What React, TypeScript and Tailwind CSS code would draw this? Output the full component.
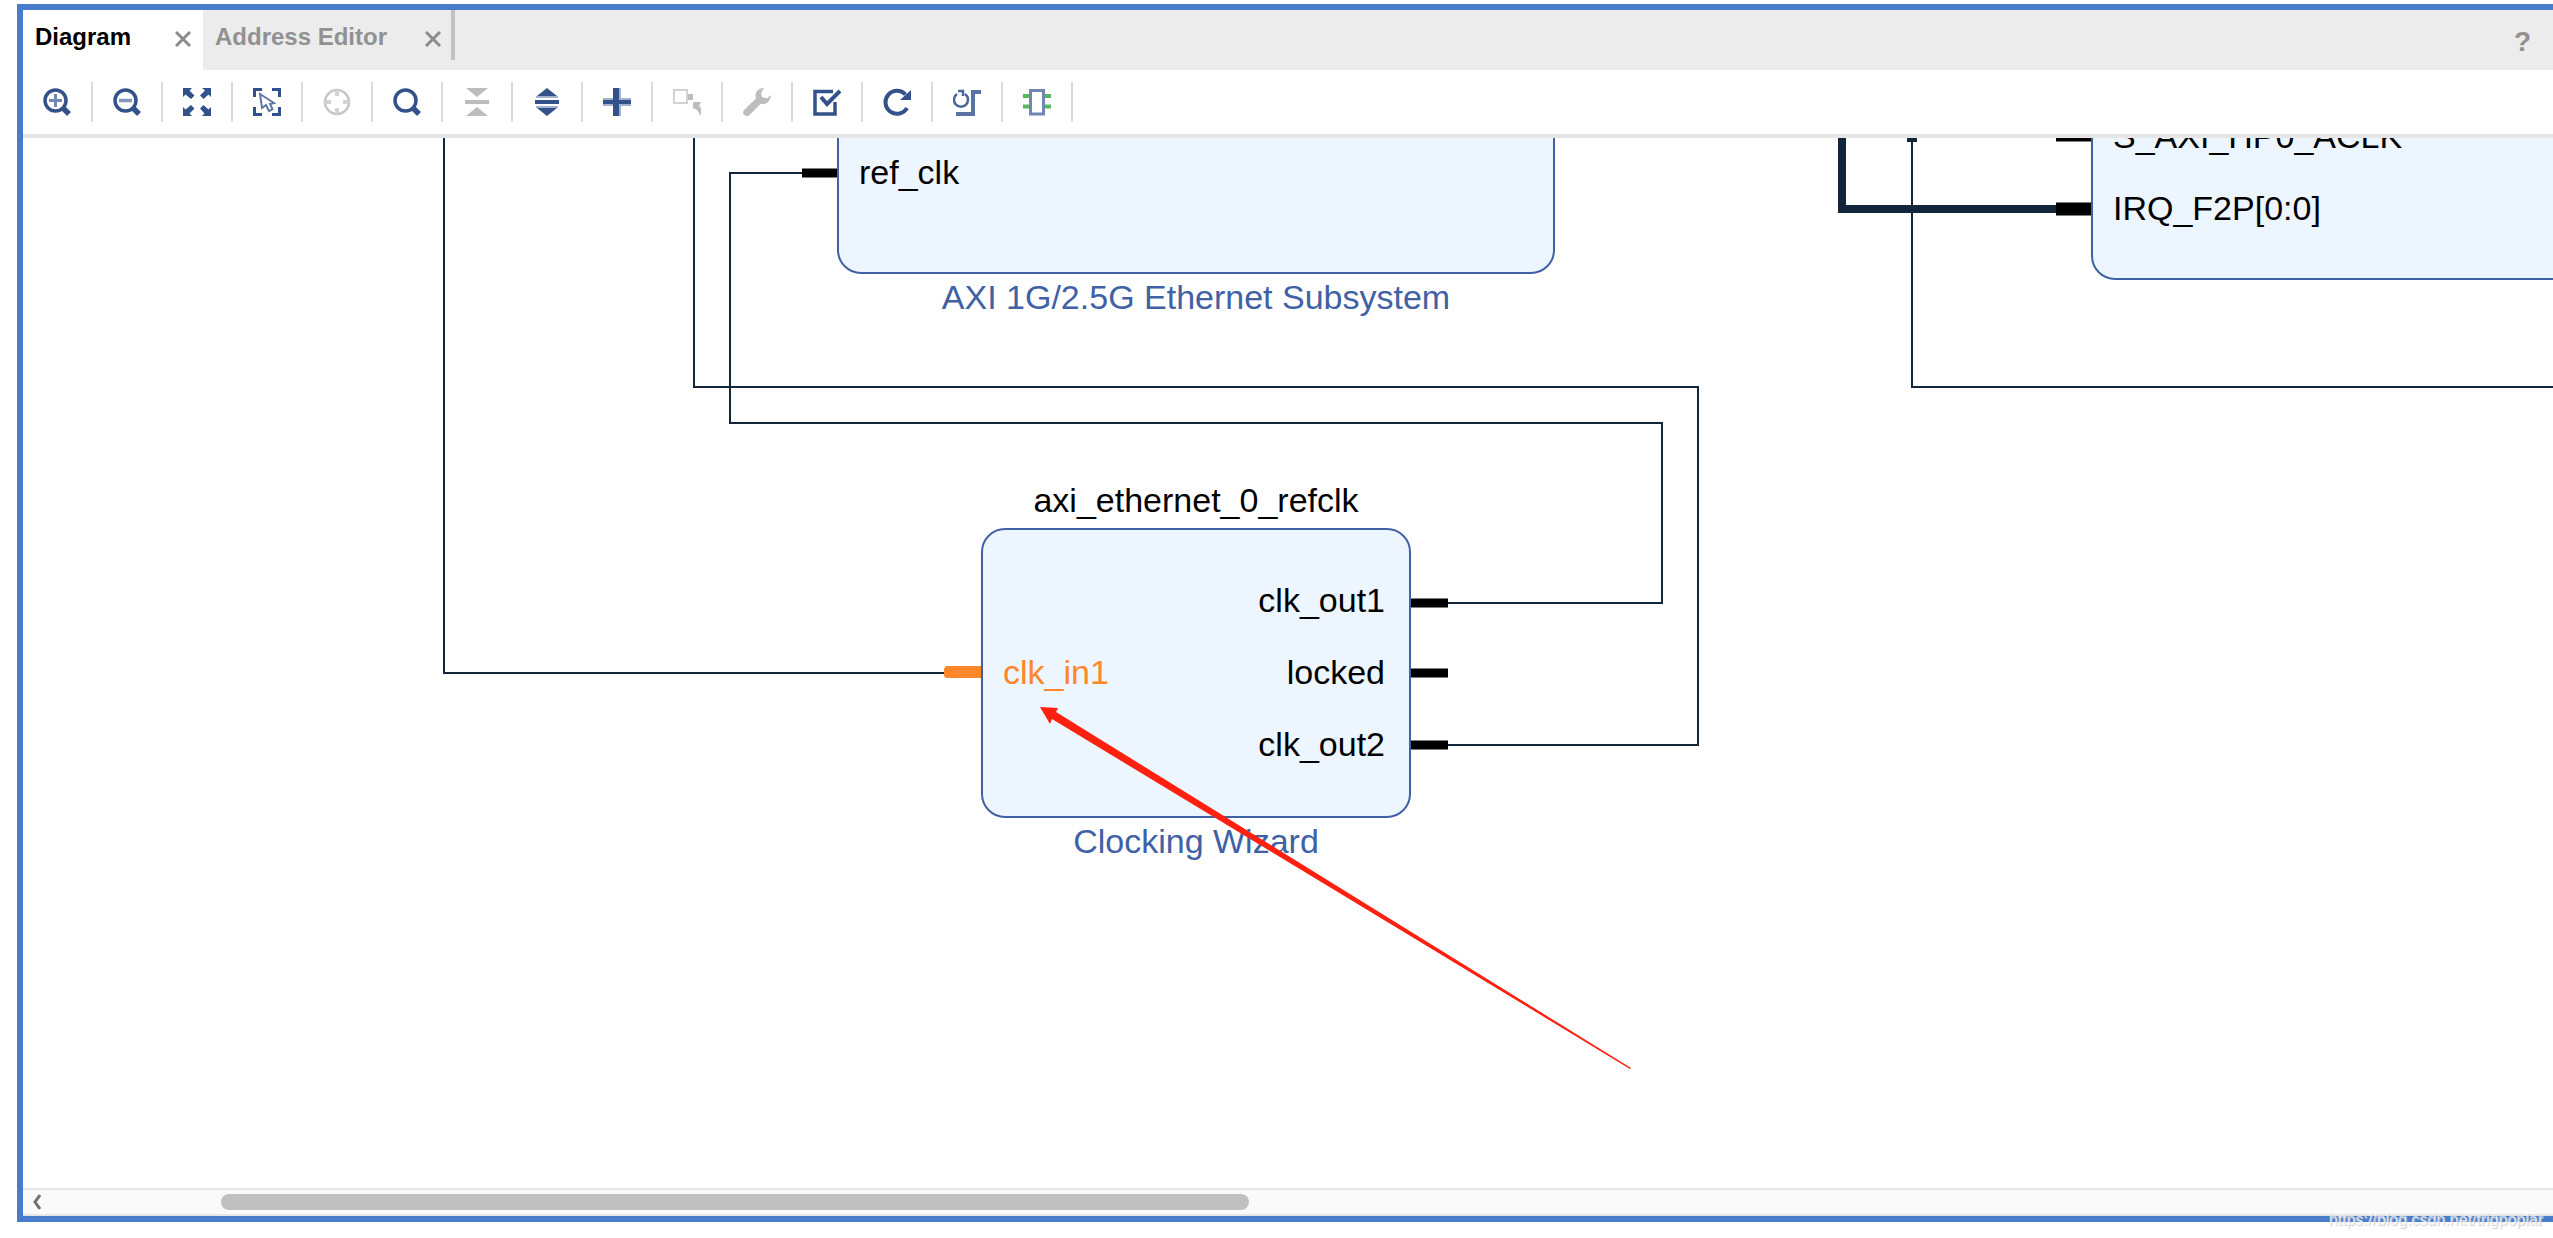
import type { ReactNode } from "react";

const NAVY = "#33518a";
const PALE = "#a4b1cd";
const GREY = "#bdbdbd";

function Icon({ children }: { children: ReactNode }) {
  return (
    <svg viewBox="0 0 28 28" className="size-7" fill="none" aria-hidden="true">
      {children}
    </svg>
  );
}

function Lens({ children }: { children?: ReactNode }) {
  return (
    <Icon>
      <circle cx="12.5" cy="12.5" r="10.5" stroke={NAVY} strokeWidth="3.5" />
      <path d="M20 20l6 6" stroke={NAVY} strokeWidth="5.5" />
      {children}
    </Icon>
  );
}

const tools: { label: string; disabled?: boolean; icon: ReactNode }[] = [
  {
    label: "Zoom In",
    icon: (
      <Lens>
        <path d="M12.5 6v13M6 12.5h13" stroke="#7389b4" strokeWidth="3" />
      </Lens>
    ),
  },
  {
    label: "Zoom Out",
    icon: (
      <Lens>
        <path d="M6 12.5h13" stroke="#8396bd" strokeWidth="3.5" />
      </Lens>
    ),
  },
  {
    label: "Zoom Fit",
    icon: (
      <Icon>
        <path
          fill={NAVY}
          d="M0 0h9l-2.500 2.500 5 5-3.500 3.500-5.500-4.500L0 9zM28 0v9l-2.500-2.500-5 4.500-3.500-3.500 5-5L19 0zM0 28v-9l2.500 2.500 5.500-4.500 3.500 3.500-5 5L9 28zM28 28h-9l2.500-2.500-4.500-5 3.500-3.500 5 4.500L28 19z"
        />
      </Icon>
    ),
  },
  {
    label: "Select Area",
    icon: (
      <Icon>
        <path d="M1.500 9V1.500H9M19 1.500h7.500V9M1.500 19v7.500H9M19 26.500h7.500V19" stroke={NAVY} strokeWidth="3" />
        <path d="M7 6l2 14 4-3 3 6 3.500-2-2.500-5 4-1z" stroke="#5f78a8" strokeWidth="2" />
      </Icon>
    ),
  },
  {
    label: "Autofit Selection",
    disabled: true,
    icon: (
      <Icon>
        <circle cx="14" cy="14" r="12" stroke="#c6c6c6" strokeWidth="2.500" />
        <path d="M14 2v6M14 20v6M2 14h6M20 14h6" stroke="#d2d2d2" strokeWidth="4" />
      </Icon>
    ),
  },
  { label: "Search", icon: <Lens /> },
  {
    label: "Collapse All",
    disabled: true,
    icon: (
      <Icon>
        <path fill={GREY} d="M3 0h22L14 9zM2 12h24v4H2zM3 28h22L14 19z" />
      </Icon>
    ),
  },
  {
    label: "Expand All",
    icon: (
      <Icon>
        <path fill={NAVY} d="M14 0l10 8H4zM2 12h24v4H2zM4 20h20l-10 8z" />
        <path fill={PALE} d="M3 8h22v2H3zM3 18h22v2H3z" />
      </Icon>
    ),
  },
  {
    label: "Add IP",
    icon: (
      <Icon>
        <path fill={PALE} d="M0 10h28v8H0zM10 0h8v28h-8z" />
        <path fill={NAVY} d="M0 12h28v4H0zM10 0h6v28h-6z" />
      </Icon>
    ),
  },
  {
    label: "Make Connection",
    disabled: true,
    icon: (
      <Icon>
        <path d="M1 2h13v13H1z" stroke="#d2d2d2" strokeWidth="2" />
        <path fill={GREY} d="M15 6h5v6h-5zM20 14h8l-2 4 2 2v8l-4-6-4-2z" />
      </Icon>
    ),
  },
  {
    label: "Customize Block",
    disabled: true,
    icon: (
      <Icon>
        <path
          fill={GREY}
          d="M21 0c-6 0-10 5-8 10.500L1 22c-3 4 2 8 5.500 5L17.500 16c6 1 10-3 10.500-9l-4 3.500-5-1.500-1-4z"
        />
      </Icon>
    ),
  },
  {
    label: "Validate Design",
    icon: (
      <Icon>
        <path d="M20 3.500H2v22.500h20V14" stroke={NAVY} strokeWidth="3.500" />
        <path d="M8 9l6 7L27 3" stroke={NAVY} strokeWidth="4" />
      </Icon>
    ),
  },
  {
    label: "Regenerate Layout",
    icon: (
      <Icon>
        <path d="M22.500 6.500A11.500 11.500 0 1 0 24 20" stroke={NAVY} strokeWidth="4" />
        <path fill={NAVY} d="M28 2v10H17z" />
      </Icon>
    ),
  },
  {
    label: "Optimize Routing",
    icon: (
      <Icon>
        <path d="M4 6a7 7 0 1 0 8 0" stroke="#4a659a" strokeWidth="2.500" />
        <path d="M5 3h5v5" stroke="#4a659a" strokeWidth="2.500" />
        <path d="M28 4h-8v22H3" stroke="#5a73a3" strokeWidth="4" />
      </Icon>
    ),
  },
  {
    label: "Interface Ports",
    icon: (
      <Icon>
        <path d="M0 8h28M0 18.500h28" stroke="#56ba5c" strokeWidth="4" />
        <path d="M7.500 2.500h13v23.500h-13z" fill="#fff" stroke="#7286b2" strokeWidth="3" />
      </Icon>
    ),
  },
];

function CloseButton({ label }: { label: string }) {
  return (
    <button type="button" aria-label={label} className="mt-1 text-[#8c8c8c]">
      <svg viewBox="0 0 16 16" className="size-4" aria-hidden="true">
        <path d="M1 1l14 14M15 1L1 15" stroke="currentColor" strokeWidth="3" />
      </svg>
    </button>
  );
}

function Wires() {
  return (
    <svg className="absolute inset-0 h-full w-full" fill="none" aria-hidden="true">
      <g stroke="#12253a" strokeWidth="2">
        <path d="M421 0V535H924" />
        <path d="M671 0V249H1675V607H1420" />
        <path d="M780 35H707V285H1639V465H1420" />
        <path d="M1889 0V249H4000" />
        <path d="M1819 0V71H2035" strokeWidth="8" />
      </g>
      <path d="M1884 0h10v4h-10z" fill="#12253a" />
      <g stroke="#000" strokeWidth="9">
        <path d="M779 35h36M1388 465h37M1388 535h37M1388 607h37M2033 -1h36" />
        <path d="M2033 71h36" strokeWidth="13" />
      </g>
      <path d="M958 528h-35l-2 3v7l2 2h35z" fill="#ff8629" />
    </svg>
  );
}

export default function App() {
  return (
    <div className="relative flex h-screen flex-col overflow-hidden bg-white pt-1 pb-4 pl-[17px] font-['Liberation_Sans',Arial,sans-serif]">
      <main className="flex min-h-0 flex-1 flex-col border-6 border-r-0 border-[#4a7ccc]">
        <header className="flex h-15 shrink-0 items-start bg-[#ececec]">
          <div className="flex h-full w-[180px] items-center justify-between bg-white pr-3 pb-[6px] pl-3">
            <button type="button" className="text-[24px] leading-8 font-bold text-black">
              Diagram
            </button>
            <CloseButton label="Close Diagram" />
          </div>
          <div className="flex h-[50px] w-[252px] items-center justify-between border-r-4 border-[#c2c2c2] pt-1 pr-[10px] pl-3">
            <button type="button" className="text-[24px] leading-8 font-bold text-[#919191]">
              Address Editor
            </button>
            <CloseButton label="Close Address Editor" />
          </div>
          <button
            type="button"
            aria-label="Help"
            className="mt-4 mr-[22px] ml-auto text-[28px] leading-8 font-bold text-[#919191]"
          >
            ?
          </button>
        </header>

        <div role="toolbar" aria-label="Diagram tools" className="flex h-17 shrink-0 border-b-4 border-[#e6e6e6] py-3">
          {tools.map((tool) => (
            <button
              key={tool.label}
              type="button"
              aria-label={tool.label}
              disabled={tool.disabled}
              className="flex w-[70px] justify-center border-r-2 border-[#dadada] pt-[6px]"
            >
              {tool.icon}
            </button>
          ))}
        </div>

        <section aria-label="Block design" className="relative min-h-0 flex-1 overflow-hidden text-[34px] leading-10 text-black">
          <Wires />

          <div className="absolute top-[-200px] left-[814px] w-[718px]">
            <div className="flex h-[336px] flex-col justify-end rounded-3xl border-2 border-[#4161a5] bg-[#edf5ff] px-5 pb-20">
              <span>ref_clk</span>
            </div>
            <p className="pt-[3px] text-center text-[#4161a5]">AXI 1G/2.5G Ethernet Subsystem</p>
          </div>

          <div className="absolute top-[342px] left-[958px] w-[430px]">
            <p className="pb-2 text-center">axi_ethernet_0_refclk</p>
            <div className="flex h-[290px] items-center justify-between rounded-3xl border-2 border-[#4161a5] bg-[#edf5ff] pr-6 pb-[3px] pl-5">
              <span className="text-[#ff8629]">clk_in1</span>
              <div className="flex flex-col gap-8 text-right">
                <span>clk_out1</span>
                <span>locked</span>
                <span>clk_out2</span>
              </div>
            </div>
            <p className="pt-[3px] text-center text-[#4161a5]">Clocking Wizard</p>
          </div>

          <div className="absolute top-[-200px] -right-10 left-[2068px] flex h-[342px] flex-col justify-end gap-8 rounded-3xl border-2 border-[#4161a5] bg-[#edf5ff] px-5 pb-[50px]">
            <span>S_AXI_HP0_ACLK</span>
            <span>IRQ_F2P[0:0]</span>
          </div>

          <svg className="absolute inset-0 h-full w-full" aria-hidden="true">
            <path d="M1017 569L1035 570 1033 574 1608 930 1607 931 1029 581 1027 586Z" fill="#ff2010" />
          </svg>
        </section>

        <div className="flex h-7 shrink-0 items-center border-y-2 border-[#e6e6e6] bg-[#fafafa]">
          <button type="button" aria-label="Scroll left" className="w-[198px] pl-[10px]">
            <svg viewBox="0 0 8 16" className="h-4 w-2" fill="none" aria-hidden="true">
              <path d="M7 1L2 8l5 7" stroke="#707070" strokeWidth="3" />
            </svg>
          </button>
          <div className="h-4 w-[1028px] rounded-full bg-[#c0c0c0]" />
        </div>
      </main>

      <p className="absolute right-[10px] bottom-2 text-[16px] leading-5 text-white/70 [text-shadow:1px_1px_1px_#ccc]">
        https://blog.csdn.net/trigpoplar
      </p>
    </div>
  );
}
